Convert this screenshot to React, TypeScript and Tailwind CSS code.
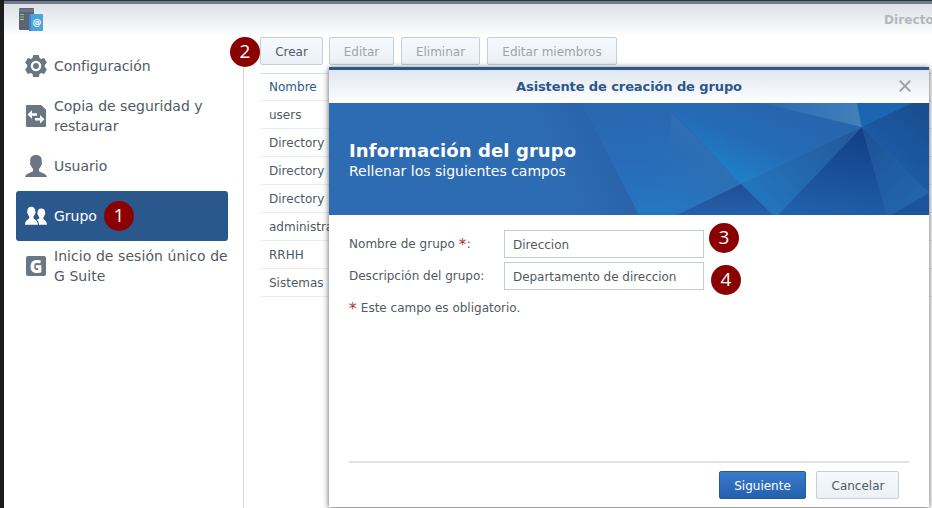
import React from 'react';

const gear = (
  <svg className="h-6 w-6" viewBox="0 0 24 24">
    <path
      fill="#6b7684"
      fillRule="evenodd"
      d="M9 1.500q.1-.5.600-.5h4.800q.5 0 .6.500l.5 2.400 1.700 1 2.500-.8q.5-.1.800.3l2.200 3.800q.3.500-.1.900l-1.700 1.700v2.400l1.700 1.700q.4.400.1.900l-2.200 3.800q-.3.400-.8.300l-2.500-.8-1.700 1-.5 2.400q-.1.500-.6.500H9.600q-.5 0-.6-.5l-.5-2.400-1.700-1-2.500.8q-.5.100-.8-.3l-2.200-3.800q-.3-.5.100-.9l1.700-1.700v-2.400L1.400 9.100q-.4-.4-.1-.9l2.200-3.800q.3-.4.800-.3l2.500.8 1.700-1zM12 6.800a5.200 5.200 0 1 0 0 10.400 5.200 5.200 0 0 0 0-10.400z"
    />
    <circle cx="12" cy="12" r="2.900" fill="#6b7684" />
  </svg>
);

const backup = (
  <svg className="h-6 w-6" viewBox="0 0 24 24">
    <path fill="#6b7684" d="M3 1h14l5 4.500V22a1 1 0 0 1-1 1H3a1 1 0 0 1-1-1V2a1 1 0 0 1 1-1z" />
    <path fill="#fff" d="M3.500 10.500 8 6.300v2.900h5v2.600H8v2.900zM20.500 15.300l-4.500-4.200V14h-5v2.600h5v2.900z" />
  </svg>
);

const user = (
  <svg className="h-6 w-6" viewBox="0 0 24 24">
    <path
      fill="#6b7684"
      d="M12 1c3.800 0 5.800 2.200 5.800 5.500 0 .8-.1 1.300-.2 1.700.8.300.6 2.600-.5 3-.4 1.600-1.100 2.700-2.100 3.600v2.400c1.700 1.700 7.500 2 8 5.800H1c.5-3.800 6.300-4.100 8-5.800v-2.400c-1-.9-1.700-2-2.100-3.600-1.100-.4-1.300-2.700-.5-3-.1-.4-.2-.9-.2-1.700C6.200 3.200 8.200 1 12 1z"
    />
  </svg>
);

const group = (
  <svg className="h-6 w-6" viewBox="0 0 24 24">
    <path
      fill="#fff"
      d="M17.300 4.500c2.500 0 3.900 1.600 3.800 4.100.5.200.3 1.900-.4 2.100-.2 1.200-.7 1.900-1.300 2.500v1.500c.9 1.500 3.300 1.800 3.600 6h-8c-.2-2.700-1-4.100-2.400-5 1.500-.4 2.200-.7 2.600-1.100v-1.500c-.6-.6-1-1.300-1.200-2.400-.7-.3-.9-1.900-.4-2.100-.1-2.500 1.200-4.100 3.700-4.100z"
    />
    <path
      fill="#fff"
      d="M7.200 2.700c2.800 0 4.200 1.700 4.100 4.500.6.200.4 2.200-.4 2.500-.2 1.200-.7 2.100-1.400 2.800v1.700c1 1.600 4.200 1.900 4.500 6.500H1c.3-4.600 3.200-4.900 4.200-6.500v-1.700c-.7-.7-1.200-1.600-1.400-2.800-.8-.3-1-2.300-.4-2.500-.1-2.800 1.200-4.500 3.800-4.500z"
    />
  </svg>
);

const gSuite = (
  <span className="mx-0.5 flex h-5 w-5 items-center justify-center rounded-[2px] bg-[#6b7684] font-['Open_Sans',sans-serif] text-[17px] leading-none font-extrabold text-white">
    G
  </span>
);

const menu = [
  { label: 'Configuración', icon: gear, ls: 'tracking-[-0.05px]' },
  { label: 'Copia de seguridad y restaurar', icon: backup, ls: '' },
  { label: 'Usuario', icon: user, ls: 'tracking-[0.02px]' },
  { label: 'Grupo', icon: group, ls: '', active: true },
  { label: 'Inicio de sesión único de G Suite', icon: gSuite, ls: 'tracking-[0.06px]' },
];

const rows = ['users', 'Directory', 'Directory', 'Directory', 'administradores', 'RRHH', 'Sistemas'];

function Badge({ n, place }: { n: number; place: string }) {
  return (
    <span
      className={`absolute z-20 flex h-[30px] w-[30px] items-center justify-center rounded-full bg-[#8b0000] pb-[2px] font-['Open_Sans',sans-serif] text-[19px] leading-none text-white ${place}`}
    >
      {n}
    </span>
  );
}

function AppIcon() {
  return (
    <svg className="h-6 w-6" viewBox="0 0 24 24">
      <rect width="15" height="22" rx="1" fill="#5d6277" />
      <path d="M0 1h15v3H0z" fill="#6e7389" />
      <path d="M1 6.500h4M1 9h4" stroke="#62d676" strokeWidth="1.200" />
      <path d="M1 11.500h4" stroke="#b6d957" strokeWidth="1" />
      <rect x="10" y="6" width="14" height="17" rx="1" fill="#4ba3df" />
      <path d="M10 6h2v17h-2z" fill="#3b87c8" />
      <text x="18" y="17.300" textAnchor="middle" fontSize="9" fontWeight="700" fontFamily="DejaVu Sans" fill="#fff">@</text>
    </svg>
  );
}

function Banner() {
  return (
    <svg className="absolute inset-0" width="600" height="112" viewBox="0 0 600 112">
      <defs>
        <linearGradient id="a" x1="0" y1="0" x2="0.1" y2="1"><stop offset="0" stopColor="#2968b0" /><stop offset=".5" stopColor="#286bb7" /><stop offset="1" stopColor="#2576c0" /></linearGradient>
        <linearGradient id="b" gradientUnits="userSpaceOnUse" x1="440" y1="5" x2="410" y2="82"><stop offset="0" stopColor="#2766ae" /><stop offset=".45" stopColor="#246bb6" /><stop offset="1" stopColor="#1e82ca" /></linearGradient>
        <linearGradient id="c" gradientUnits="userSpaceOnUse" x1="520" y1="30" x2="435" y2="110"><stop offset="0" stopColor="#24589a" /><stop offset="1" stopColor="#2277bf" /></linearGradient>
        <linearGradient id="d" x1=".6" y1="0" x2=".4" y2="1"><stop offset="0" stopColor="#123e86" /><stop offset="1" stopColor="#2060a9" /></linearGradient>
        <linearGradient id="e" x1="0" y1="0" x2=".6" y2="1"><stop offset="0" stopColor="#1d5096" /><stop offset="1" stopColor="#2266aa" /></linearGradient>
        <linearGradient id="f" x1="1" y1="0" x2=".4" y2="1"><stop offset="0" stopColor="#194c8e" /><stop offset="1" stopColor="#1d60ab" /></linearGradient>
        <linearGradient id="g" gradientUnits="userSpaceOnUse" x1="230" y1="80" x2="290" y2="50"><stop offset="0" stopColor="#2d6bb2" /><stop offset="1" stopColor="#2963aa" /></linearGradient>
        <linearGradient id="h" x1=".5" y1="0" x2=".5" y2="1"><stop offset="0" stopColor="#234d94" /><stop offset="1" stopColor="#2360ab" /></linearGradient>
        <linearGradient id="i" x1="0" y1="0" x2="1" y2="0"><stop offset="0" stopColor="#2a69b2" /><stop offset="1" stopColor="#4280ba" /></linearGradient>
        <linearGradient id="j" gradientUnits="userSpaceOnUse" x1="330" y1="78" x2="378" y2="38"><stop offset="0" stopColor="#2e6fb4" stopOpacity="0" /><stop offset="1" stopColor="#2e6fb4" /></linearGradient>
      </defs>
      <path fill="#2d6bb2" d="M0 0h600v112H0z" />
      <path fill="url(#g)" d="M180 0h73l57 112H180z" />
      <path fill="url(#a)" d="M253 0h90l69 81-64 31h-38z" />
      <path fill="url(#j)" d="M343 10 412 81l-64 31h-20z" />
      <path fill="url(#b)" d="M336 0h97l100 24-121 57z" />
      <path fill="url(#i)" d="M433 0h95l5 24z" />
      <path fill="#1b65b3" d="M528 0h55l-50 24z" />
      <path fill="url(#f)" d="M583 0h17v90l-67-66z" />
      <path fill="url(#c)" d="M533 24 412 81l32 31h5z" />
      <path fill="url(#h)" d="m412 81-64 31h96z" />
      <path fill="url(#d)" d="m533 24-84 88h109z" />
      <path fill="url(#e)" d="m533 24 67 66-38 22h-4z" />
      <path fill="#1b549b" d="M600 90v22h-38z" />
    </svg>
  );
}

function Required() {
  return <span className="inline-block w-2 text-[15px] leading-3 align-[-2px] text-[#b0302c]">*</span>;
}

const button = 'flex h-7 items-center justify-center rounded-[2px] border border-[#c3cfd9] bg-linear-to-b from-[#f5f9fd] to-[#ebf1f6] pt-px';
const field = 'flex h-7 w-[200px] items-center border border-[#c1ced8] bg-white pl-2 pt-px whitespace-nowrap';

export default function App() {
  return (
    <div className="relative h-[508px] w-[932px] overflow-hidden bg-white pl-1 font-['DejaVu_Sans',Verdana,sans-serif] text-[12px] text-[#505a64]">
      <div className="absolute inset-y-0 left-0 w-1 bg-[#1c1c1c]" />
      <div className="h-1 border-t border-[#26374e] bg-[#737a86]" />
      <header className="flex h-[32px] justify-between bg-linear-to-b from-[#dce0e5] to-white pl-[15px]">
        <div className="pt-1"><AppIcon /></div>
        <div className="w-[48px] overflow-hidden pt-2 text-[12px] leading-[17px] font-bold tracking-[0.1px] whitespace-nowrap text-[#b1b7be]">Directo</div>
      </header>
      <div className="flex h-[472px]">
        <nav className="flex w-[240px] shrink-0 flex-col border-r border-[#d5d8db] pt-[5px] pl-3">
          {menu.map((m) => (
            <div
              key={m.label}
              className={`flex h-[50px] w-[212px] items-center gap-[6px] rounded-[3px] pl-2 text-[14px] leading-5 ${m.ls} ${m.active ? 'bg-[#2a588c] text-white' : ''}`}
            >
              <span className="w-6 shrink-0">{m.icon}</span>
              <span className="w-[178px] shrink-0">{m.label}</span>
            </div>
          ))}
        </nav>
        <main className="grow pl-4">
          <div className="flex gap-[6px] pt-px">
            <div className={`${button} w-[63px]`}>Crear</div>
            <div className={`${button} w-[65px] text-[#9da4ab]`}>Editar</div>
            <div className={`${button} ml-[1px] w-[79px] text-[#9da4ab]`}>Eliminar</div>
            <div className={`${button} ml-[1px] w-[130px] text-[#9da4ab]`}>Editar miembros</div>
          </div>
          <div className="mt-2 border-t border-[#d5dde4]">
            <div className="h-[27px] border-b border-[#e8ebee] pl-[9px] leading-[27px] text-[#2a588c]">Nombre</div>
            {rows.map((r, i) => (
              <div key={i} className="h-7 border-b border-[#e8ebee] pl-[9px] leading-[29px]">{r}</div>
            ))}
          </div>
        </main>
      </div>

      <section className="absolute top-[67px] left-[329px] flex h-[440px] w-[600px] flex-col bg-white shadow-[0_1px_6px_rgba(0,0,0,0.65)]">
        <div className="relative flex h-9 shrink-0 items-center justify-center border-t-[3px] border-[#2a588c] bg-linear-to-b from-[#dfe6f0] to-white text-[13px] font-bold tracking-[-0.1px] text-[#2a588c]">
          <span>Asistente de creación de grupo</span>
          <svg className="absolute top-[10px] right-[18px]" width="12" height="12" viewBox="0 0 12 12"><path d="m.7.7 10.600 10.600M11.300.7.700 11.300" stroke="#979da3" strokeWidth="1.800" /></svg>
        </div>
        <div className="relative h-28 shrink-0 pt-9 pl-5 text-white">
          <Banner />
          <h1 className="relative text-[18px] leading-[23px] font-bold tracking-[0.1px]">Información del grupo</h1>
          <p className="relative text-[14px] leading-[18px]">Rellenar los siguientes campos</p>
        </div>
        <div className="flex grow flex-col gap-1 px-5 pt-[15px]">
          <div className="flex items-center"><label className="w-[155px] tracking-[0.03px]">Nombre de grupo <Required />:</label><div className={field}>Direccion</div></div>
          <div className="flex items-center"><label className="w-[155px] whitespace-nowrap">Descripción del grupo:</label><div className={`${field} tracking-[-0.04px]`}>Departamento de direccion</div></div>
          <p className="pt-1 leading-5"><Required /> Este campo es obligatorio.</p>
        </div>
        <footer className="mx-5 flex h-[46px] shrink-0 justify-end gap-[10px] border-t-2 border-[#e0e2e4] pt-[8px] pr-[10px]">
          <div className="flex h-7 w-[87px] items-center justify-center rounded-[2px] border border-[#255999] bg-linear-to-b from-[#3a7bcb] to-[#2460ae] pt-px text-white">Siguiente</div>
          <div className={`${button} w-[83px] pl-px`}>Cancelar</div>
        </footer>
      </section>

      <Badge n={1} place="left-[104px] top-[201px]" />
      <Badge n={2} place="left-[230px] top-[37px]" />
      <Badge n={3} place="left-[709px] top-[223px]" />
      <Badge n={4} place="left-[711px] top-[265px]" />
    </div>
  );
}
